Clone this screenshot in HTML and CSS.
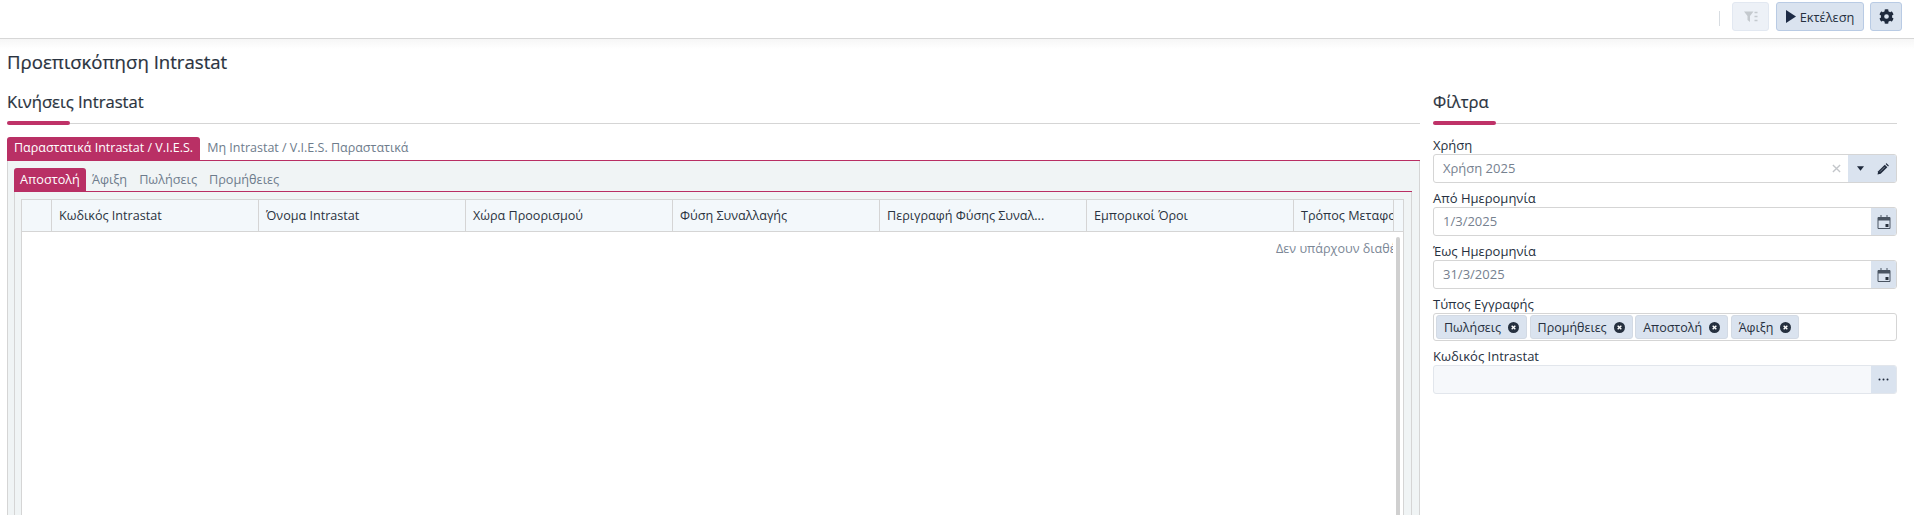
FILE: index.html
```html
<!DOCTYPE html>
<html lang="el">
<head>
<meta charset="utf-8">
<title>Προεπισκόπηση Intrastat</title>
<link rel="stylesheet" href="styles.css">
</head>
<body>
<header class="topbar">
  <span class="sep"></span>
  <button class="btn btn-disabled"><svg class="ic-filter" viewBox="0 0 14 12"><path d="M0 .5h9.500L6 5v6L3.500 9V5z" fill="#c4c9ce"/><path d="M10.500 1.500h3M10.500 5.500h3M10.500 9.500h3" stroke="#c4c9ce" stroke-width="1.500" fill="none"/></svg></button>
  <button class="btn btn-run"><svg class="ic-play" viewBox="0 0 10 13"><path d="M0 0l10 6.500-10 6.500z" fill="#1d2b45"/></svg>Εκτέλεση</button>
  <button class="btn btn-gear"><svg class="ic-gear" viewBox="0 0 512 512"><path fill="#1f2a3d" d="M487 316l-42-25a190 190 0 0 0 0-70l42-25c5-3 7-9 5-14-11-35-30-67-54-93-4-4-10-5-15-2l-42 25a187 187 0 0 0-61-35V28c0-6-4-11-9-12-36-8-73-8-108 0-6 1-10 6-10 12v49a192 192 0 0 0-61 35L90 87c-5-3-11-2-15 2-24 26-43 58-54 93-2 5 0 11 5 14l42 25a190 190 0 0 0 0 70l-42 25c-5 3-7 9-5 14 11 35 30 67 54 93 4 4 10 5 15 2l42-25a187 187 0 0 0 61 35v49c0 6 4 11 10 12 36 8 72 8 108 0 5-1 9-6 9-12v-49a192 192 0 0 0 61-35l42 25c5 3 11 2 15-2 24-26 43-58 54-93 2-5 0-11-5-14zM256 336a80 80 0 1 1 0-160 80 80 0 0 1 0 160z"/></svg></button>
</header>
<main class="page">
  <h1 class="title">Προεπισκόπηση Intrastat</h1>
  <div class="columns">
    <section class="left">
      <h2 class="heading">Κινήσεις Intrastat</h2>
      <div class="rule"></div>
      <nav class="tabs outer-tabs">
        <span class="tab tab-active">Παραστατικά Intrastat / V.I.E.S.</span>
        <span class="tab">Μη Intrastat / V.I.E.S. Παραστατικά</span>
      </nav>
      <div class="outer-panel">
        <nav class="tabs inner-tabs">
          <span class="tab tab-active">Αποστολή</span>
          <span class="tab">Άφιξη</span>
          <span class="tab">Πωλήσεις</span>
          <span class="tab">Προμήθειες</span>
        </nav>
        <div class="inner-panel">
          <div class="grid">
            <div class="grid-head">
              <div class="cell cell-sel"></div>
              <div class="cell">Κωδικός Intrastat</div>
              <div class="cell">Όνομα Intrastat</div>
              <div class="cell">Χώρα Προορισμού</div>
              <div class="cell">Φύση Συναλλαγής</div>
              <div class="cell">Περιγραφή Φύσης Συναλ...</div>
              <div class="cell">Εμπορικοί Όροι</div>
              <div class="cell cell-clip">Τρόπος Μεταφοράς</div>
              <div class="cell-end"></div>
            </div>
            <div class="grid-body">
              <div class="empty"><span class="empty-text">Δεν υπάρχουν διαθέσιμα δεδομένα</span></div>
              <div class="scrollbar"></div>
            </div>
          </div>
        </div>
      </div>
    </section>
    <aside class="right">
      <h2 class="heading">Φίλτρα</h2>
      <div class="rule"></div>
      <div class="fields">
        <label class="label">Χρήση</label>
        <div class="field">
          <span class="value">Χρήση 2025</span>
          <svg class="ic-x" viewBox="0 0 10 10"><path d="M1 1l8 8M9 1l-8 8" stroke="#c3c6ca" stroke-width="1.500" fill="none"/></svg>
          <span class="addon addon-wide">
            <svg class="ic-caret" viewBox="0 0 8 5"><path d="M0 0h8L4 5z" fill="#1f2a3d"/></svg>
            <svg class="ic-pencil" viewBox="0 0 12 12"><path d="M.5 11.500l.7-3.200L7.800 1.700l2.500 2.500-6.600 6.600z" fill="#1f2a3d"/><path d="M3 8.700L7.800 3.900" stroke="#8d97a5" stroke-width=".8"/><path d="M8.600 .9l.5-.5c.2-.2.500-.2.700 0l1.800 1.800c.2.200.2.500 0 .7l-.5.500z" fill="#1f2a3d"/></svg>
          </span>
        </div>
        <label class="label">Από Ημερομηνία</label>
        <div class="field">
          <span class="value">1/3/2025</span>
          <span class="addon addon-cal"><svg class="ic-cal" viewBox="0 0 14 14"><path d="M1 2.500h12v11h-12z" fill="none" stroke="#4a5462" stroke-width="1"/><path d="M1 3h12v2.500h-12z" fill="#4a5462"/><path d="M3.500 0h1v2h-1zM9.500 0h1v2h-1z" fill="#4a5462"/><path d="M8.500 9h3v3h-3z" fill="#28313d"/></svg></span>
        </div>
        <label class="label">Έως Ημερομηνία</label>
        <div class="field">
          <span class="value">31/3/2025</span>
          <span class="addon addon-cal"><svg class="ic-cal" viewBox="0 0 14 14"><path d="M1 2.500h12v11h-12z" fill="none" stroke="#4a5462" stroke-width="1"/><path d="M1 3h12v2.500h-12z" fill="#4a5462"/><path d="M3.500 0h1v2h-1zM9.500 0h1v2h-1z" fill="#4a5462"/><path d="M8.500 9h3v3h-3z" fill="#28313d"/></svg></span>
        </div>
        <label class="label">Τύπος Εγγραφής</label>
        <div class="field field-chips">
          <span class="chip">Πωλήσεις<svg class="ic-close" viewBox="0 0 12 12"><circle cx="6" cy="6" r="6" fill="#25303f"/><path d="M4 4l4 4M8 4l-4 4" stroke="#fff" stroke-width="1.500"/></svg></span>
          <span class="chip">Προμήθειες<svg class="ic-close" viewBox="0 0 12 12"><circle cx="6" cy="6" r="6" fill="#25303f"/><path d="M4 4l4 4M8 4l-4 4" stroke="#fff" stroke-width="1.500"/></svg></span>
          <span class="chip">Αποστολή<svg class="ic-close" viewBox="0 0 12 12"><circle cx="6" cy="6" r="6" fill="#25303f"/><path d="M4 4l4 4M8 4l-4 4" stroke="#fff" stroke-width="1.500"/></svg></span>
          <span class="chip">Άφιξη<svg class="ic-close" viewBox="0 0 12 12"><circle cx="6" cy="6" r="6" fill="#25303f"/><path d="M4 4l4 4M8 4l-4 4" stroke="#fff" stroke-width="1.500"/></svg></span>
        </div>
        <label class="label">Κωδικός Intrastat</label>
        <div class="field field-readonly">
          <span class="value"></span>
          <span class="addon addon-cal addon-dots"><svg class="ic-dots" viewBox="0 0 11 3"><circle cx="1.500" cy="1.500" r="1" fill="#1f2a3d"/><circle cx="5.500" cy="1.500" r="1" fill="#1f2a3d"/><circle cx="9.500" cy="1.500" r="1" fill="#1f2a3d"/></svg></span>
        </div>
      </div>
    </aside>
  </div>
</main>
</body>
</html>
```
FILE: styles.css
```css
* { box-sizing: border-box; }
html, body { margin: 0; padding: 0; }
body {
  width: 1914px;
  height: 515px;
  overflow: hidden;
  background: #fff;
  font-family: "Open Sans", "Noto Sans", sans-serif;
  font-size: 12.600px;
  color: #263040;
}
.topbar {
  height: 39px;
  border-bottom: 1px solid #d7d7d7;
  display: flex;
  justify-content: flex-end;
  align-items: flex-start;
  padding: 2px 12px 0 0;
  background: #fff;
}
.sep {
  width: 1px;
  height: 15px;
  margin: 9px 12px 0 0;
  background: #d8dde2;
}
.btn {
  height: 29px;
  padding: 0;
  border: 1px solid #b9cbe4;
  border-radius: 3px;
  background: #dae3ef;
  font: inherit;
  color: #263040;
  display: flex;
  align-items: center;
  justify-content: center;
}
.btn-disabled { width: 37px; margin-right: 7px; background: #edf1f7; border-color: #e2e8f1; }
.btn-run { width: 88px; margin-right: 6px; font-size: 12.800px; }
.btn-gear { width: 32px; }
.ic-filter { width: 14px; height: 12px; }
.ic-play { width: 10px; height: 13px; margin-right: 4px; }
.ic-gear { width: 15px; height: 15px; }

.page {
  height: 476px;
  padding-top: 10px;
  background: linear-gradient(#f6f6f6, #fff 10px);
}
.title {
  margin: 0 0 15px 7px;
  font-size: 18.600px;
  line-height: 26px;
  font-weight: 500;
  color: #2a3340;
  -webkit-text-stroke: 0.2px #2a3340;
}
.columns { display: flex; height: 425px; }
.left { width: 1420px; padding-left: 7px; flex: none; }
.right { width: 464px; margin-left: 13px; flex: none; }
.heading {
  margin: 0;
  font-size: 16.600px;
  line-height: 24px;
  font-weight: 500;
  color: #2a3340;
  -webkit-text-stroke: 0.2px #2a3340;
}
.rule {
  position: relative;
  height: 1px;
  margin-top: 9px;
  background: #d5d5d5;
}
.rule::before {
  content: "";
  position: absolute;
  left: 0;
  top: -2px;
  width: 63px;
  height: 4px;
  border-radius: 2px;
  background: #bf3268;
}
.tabs { display: flex; height: 24px; border-bottom: 1px solid #b92e63; }
.outer-tabs { margin-top: 13px; font-size: 12.500px; }
.inner-tabs { font-size: 12.700px; }
.tab {
  height: 23px;
  line-height: 22px;
  padding: 0 6px;
  color: #6e7c8c;
  white-space: nowrap;
}
.outer-tabs .tab { padding: 0 7px; }
.tab-active {
  background: #b93065;
  color: #fff;
  border-radius: 3px 3px 0 0;
}
.outer-panel {
  height: 354px;
  padding: 7px 7px 0 6px;
  background: #f0f4f5;
  border-left: 1px solid #d5d5d5;
  border-right: 1px solid #d5d5d5;
}
.inner-panel {
  height: 347px;
  padding: 7px 7px 0 6px;
  border-left: 1px solid #d5d5d5;
  border-right: 1px solid #d5d5d5;
  border-bottom: 0;
}
.grid {
  height: 340px;
  border: 1px solid #d5d5d5;
  border-bottom: 0;
  background: #fff;
  overflow: hidden;
}
.grid-head {
  display: flex;
  height: 32px;
  background: #f3f8fb;
  border-bottom: 1px solid #d5d5d5;
}
.cell {
  width: 207px;
  flex: none;
  padding-left: 7px;
  line-height: 31px;
  border-right: 1px solid #d5d5d5;
  white-space: nowrap;
  overflow: hidden;
  color: #2a3340;
}
.cell-sel { width: 30px; padding: 0; }
.cell-clip { width: 100px; padding-right: 0; }
.cell-end { flex: 1; }
.grid-body {
  display: flex;
  height: 307px;
}
.empty {
  width: 1371px;
  flex: none;
  height: 100%;
  padding: 8px 0 0 1254px;
  overflow: hidden;
  color: #7b8796;
  line-height: 18px;
  white-space: nowrap;
}
.empty-text { display: inline-block; }
.scrollbar {
  width: 4px;
  margin: 5px 0 0 3px;
  background: #d0d0d0;
  border-radius: 2px 2px 0 0;
}
.fields { display: flex; flex-direction: column; padding-top: 13px; }
.label { height: 17px; line-height: 17px; font-size: 13px; color: #263040; }
.field {
  height: 29px;
  margin-bottom: 7px;
  display: flex;
  align-items: center;
  background: #fff;
  border: 1px solid #d5d5d5;
  border-radius: 3px;
  overflow: hidden;
}
.value { flex: 1; padding: 0 0 1px 9px; font-size: 13px; color: #76818f; }
.ic-x { width: 9px; height: 9px; margin-right: 7px; }
.addon {
  align-self: stretch;
  display: flex;
  align-items: center;
  justify-content: center;
  background: #dae3ef;
  flex: none;
}
.addon-wide { width: 48px; justify-content: space-between; padding: 0 7px 0 9px; }
.addon-cal { width: 25px; }
.ic-caret { width: 7px; height: 5px; }
.ic-pencil { width: 12px; height: 12px; }
.ic-cal { width: 14px; height: 14px; }
.ic-dots { width: 11px; height: 3px; }
.field-chips { height: 28px; padding-left: 2px; gap: 2.500px; overflow: visible; }
.chip {
  height: 24px;
  padding: 0 7px;
  display: flex;
  align-items: center;
  gap: 7px;
  background: #dae3ef;
  border: 1px solid #d3dae4;
  border-radius: 3px;
  font-size: 12.500px;
  color: #263040;
  white-space: nowrap;
}
.ic-close { width: 11px; height: 11px; flex: none; }
.field-readonly { background: #f6f8fb; border-color: #e2e6ec; }
```
